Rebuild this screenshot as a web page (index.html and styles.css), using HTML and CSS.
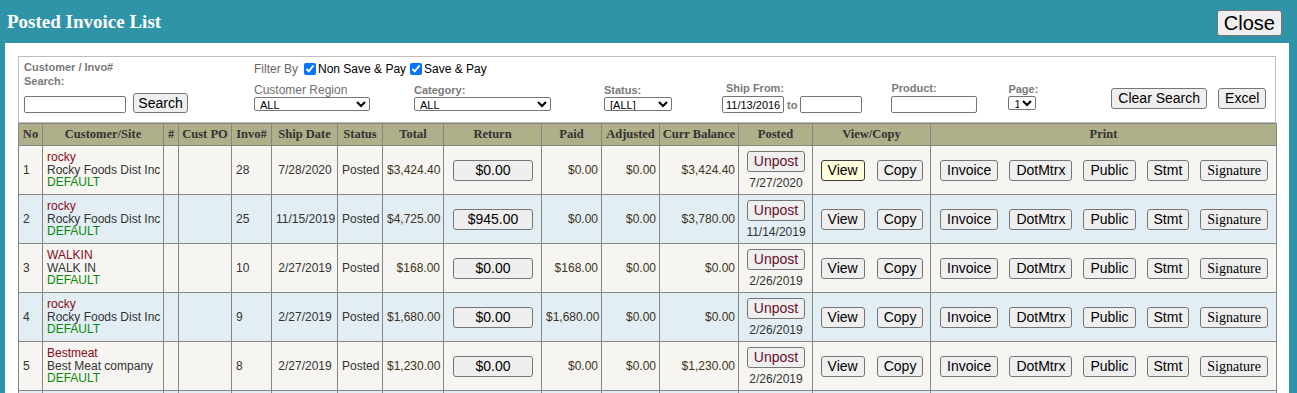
FILE: index.html
```html
<!DOCTYPE html>
<html>
<head>
<meta charset="utf-8">
<title>Posted Invoice List</title>
<link rel="stylesheet" href="styles.css">
</head>
<body>
<div class="topbar">
  <h1 class="title">Posted Invoice List</h1>
  <button class="btn close-btn">Close</button>
</div>
<div class="panel">
  <div class="filters">
    <div class="fg fg-search">
      <div class="lbl">Customer / Invo#</div>
      <div class="lbl lbl-search">Search:</div>
      <div class="inrow inrow-search">
        <input class="inp inp-search" type="text">
        <button class="btn btn-search">Search</button>
      </div>
    </div>
    <div class="fg fg-filter">
      <div class="filterby">
        <span class="fb-label">Filter By</span>
        <label class="chk"><input type="checkbox" checked>Non Save &amp; Pay</label>
        <label class="chk"><input type="checkbox" checked>Save &amp; Pay</label>
      </div>
      <div class="selrow">
        <div class="sg sg-region"><div class="lbl lbl-plain">Customer Region</div><select class="sel sel-region"><option>ALL</option></select></div>
        <div class="sg sg-cat"><div class="lbl">Category:</div><select class="sel sel-cat"><option>ALL</option></select></div>
        <div class="sg sg-status"><div class="lbl">Status:</div><select class="sel sel-status"><option>[ALL]</option></select></div>
      </div>
    </div>
    <div class="fg fg-ship">
      <div class="lbl lbl-ship">Ship From:</div>
      <div class="inrow">
        <input class="inp inp-date" type="text" value="11/13/2016">
        <span class="to">to</span>
        <input class="inp inp-date" type="text">
      </div>
    </div>
    <div class="fg fg-product">
      <div class="lbl">Product:</div>
      <input class="inp inp-product" type="text">
    </div>
    <div class="fg fg-page">
      <div class="lbl">Page:</div>
      <select class="sel sel-page"><option>1</option></select>
    </div>
    <div class="fg fg-actions">
      <button class="btn">Clear Search</button>
      <button class="btn">Excel</button>
    </div>
  </div>

  <table class="grid">
    <colgroup>
      <col class="c-no"><col class="c-cust"><col class="c-hash"><col class="c-po"><col class="c-inv">
      <col class="c-date"><col class="c-status"><col class="c-total"><col class="c-return"><col class="c-paid">
      <col class="c-adj"><col class="c-bal"><col class="c-posted"><col class="c-view"><col class="c-print">
    </colgroup>
    <thead>
      <tr>
        <th>No</th><th>Customer/Site</th><th>#</th><th>Cust PO</th><th>Invo#</th>
        <th>Ship Date</th><th>Status</th><th>Total</th><th>Return</th><th>Paid</th>
        <th>Adjusted</th><th>Curr Balance</th><th>Posted</th><th>View/Copy</th><th>Print</th>
      </tr>
    </thead>
    <tbody>
      <tr class="odd">
        <td>1</td>
        <td class="cust"><div class="code">rocky</div><div class="name">Rocky Foods Dist Inc</div><div class="site">DEFAULT</div></td>
        <td></td><td></td>
        <td>28</td>
        <td class="ctr">7/28/2020</td>
        <td>Posted</td>
        <td class="num">$3,424.40</td>
        <td class="ctr"><button class="btn btn-ret">$0.00</button></td>
        <td class="num">$0.00</td>
        <td class="num">$0.00</td>
        <td class="num">$3,424.40</td>
        <td class="ctr"><button class="btn btn-unpost">Unpost</button><div class="pdate">7/27/2020</div></td>
        <td><div class="btns btns-view"><button class="btn btn-hl">View</button><button class="btn">Copy</button></div></td>
        <td><div class="btns btns-print"><button class="btn">Invoice</button><button class="btn">DotMtrx</button><button class="btn">Public</button><button class="btn">Stmt</button><button class="btn btn-serif">Signature</button></div></td>
      </tr>
      <tr class="even">
        <td>2</td>
        <td class="cust"><div class="code">rocky</div><div class="name">Rocky Foods Dist Inc</div><div class="site">DEFAULT</div></td>
        <td></td><td></td>
        <td>25</td>
        <td class="ctr">11/15/2019</td>
        <td>Posted</td>
        <td class="num">$4,725.00</td>
        <td class="ctr"><button class="btn btn-ret">$945.00</button></td>
        <td class="num">$0.00</td>
        <td class="num">$0.00</td>
        <td class="num">$3,780.00</td>
        <td class="ctr"><button class="btn btn-unpost">Unpost</button><div class="pdate">11/14/2019</div></td>
        <td><div class="btns btns-view"><button class="btn">View</button><button class="btn">Copy</button></div></td>
        <td><div class="btns btns-print"><button class="btn">Invoice</button><button class="btn">DotMtrx</button><button class="btn">Public</button><button class="btn">Stmt</button><button class="btn btn-serif">Signature</button></div></td>
      </tr>
      <tr class="odd">
        <td>3</td>
        <td class="cust"><div class="code">WALKIN</div><div class="name">WALK IN</div><div class="site">DEFAULT</div></td>
        <td></td><td></td>
        <td>10</td>
        <td class="ctr">2/27/2019</td>
        <td>Posted</td>
        <td class="num">$168.00</td>
        <td class="ctr"><button class="btn btn-ret">$0.00</button></td>
        <td class="num">$168.00</td>
        <td class="num">$0.00</td>
        <td class="num">$0.00</td>
        <td class="ctr"><button class="btn btn-unpost">Unpost</button><div class="pdate">2/26/2019</div></td>
        <td><div class="btns btns-view"><button class="btn">View</button><button class="btn">Copy</button></div></td>
        <td><div class="btns btns-print"><button class="btn">Invoice</button><button class="btn">DotMtrx</button><button class="btn">Public</button><button class="btn">Stmt</button><button class="btn btn-serif">Signature</button></div></td>
      </tr>
      <tr class="even">
        <td>4</td>
        <td class="cust"><div class="code">rocky</div><div class="name">Rocky Foods Dist Inc</div><div class="site">DEFAULT</div></td>
        <td></td><td></td>
        <td>9</td>
        <td class="ctr">2/27/2019</td>
        <td>Posted</td>
        <td class="num">$1,680.00</td>
        <td class="ctr"><button class="btn btn-ret">$0.00</button></td>
        <td class="num">$1,680.00</td>
        <td class="num">$0.00</td>
        <td class="num">$0.00</td>
        <td class="ctr"><button class="btn btn-unpost">Unpost</button><div class="pdate">2/26/2019</div></td>
        <td><div class="btns btns-view"><button class="btn">View</button><button class="btn">Copy</button></div></td>
        <td><div class="btns btns-print"><button class="btn">Invoice</button><button class="btn">DotMtrx</button><button class="btn">Public</button><button class="btn">Stmt</button><button class="btn btn-serif">Signature</button></div></td>
      </tr>
      <tr class="odd">
        <td>5</td>
        <td class="cust"><div class="code">Bestmeat</div><div class="name">Best Meat company</div><div class="site">DEFAULT</div></td>
        <td></td><td></td>
        <td>8</td>
        <td class="ctr">2/27/2019</td>
        <td>Posted</td>
        <td class="num">$1,230.00</td>
        <td class="ctr"><button class="btn btn-ret">$0.00</button></td>
        <td class="num">$0.00</td>
        <td class="num">$0.00</td>
        <td class="num">$1,230.00</td>
        <td class="ctr"><button class="btn btn-unpost">Unpost</button><div class="pdate">2/26/2019</div></td>
        <td><div class="btns btns-view"><button class="btn">View</button><button class="btn">Copy</button></div></td>
        <td><div class="btns btns-print"><button class="btn">Invoice</button><button class="btn">DotMtrx</button><button class="btn">Public</button><button class="btn">Stmt</button><button class="btn btn-serif">Signature</button></div></td>
      </tr>
      <tr class="even">
        <td></td><td></td><td></td><td></td><td></td><td></td><td></td><td></td>
        <td></td><td></td><td></td><td></td><td></td><td></td><td></td>
      </tr>
    </tbody>
  </table>
</div>
</body>
</html>
```

FILE: styles.css
```css
* { box-sizing: border-box; }

html, body {
  margin: 0;
  padding: 0;
}

body {
  width: 1297px;
  height: 393px;
  overflow: hidden;
  background: #2f94a8;
  font-family: "Liberation Sans", Arial, sans-serif;
  font-size: 12px;
  color: #333;
}

/* ---------- top bar ---------- */
.topbar {
  display: flex;
  justify-content: space-between;
  align-items: flex-start;
  height: 43px;
  padding: 0 15px 0 7px;
}

.title {
  margin: 12px 0 0 0;
  font-family: "Liberation Serif", "Times New Roman", serif;
  font-weight: bold;
  font-size: 19px;
  line-height: 20px;
  color: #fff;
}

/* ---------- buttons ---------- */
.btn {
  font-family: "Liberation Sans", Arial, sans-serif;
  font-size: 14px;
  color: #000;
  background: #efefef;
  border: 1px solid #767676;
  border-radius: 3px;
  height: 21px;
  padding: 0 6px;
  line-height: 19px;
  margin: 0;
  white-space: nowrap;
  flex-shrink: 0;
}

.close-btn {
  margin-top: 10px;
  height: 26px;
  font-size: 20px;
  line-height: 24px;
  padding: 0 6px;
}

.btn-serif {
  font-family: "Liberation Serif", "Times New Roman", serif;
}

.btn-ret {
  width: 80px;
}

.btn-unpost {
  color: #6a0f2c;
}

.btn-hl {
  background: #ffffdc;
  border-color: #3a3a3a;
}

/* ---------- panel ---------- */
.panel {
  margin: 0 8px 0 5px;
  background: #fff;
  padding: 13px 13px 0 13px;
  height: 400px;
}

/* ---------- filters ---------- */
.filters {
  display: flex;
  align-items: flex-end;
  height: 67px;
  border: 1px solid #bdbdbd;
  padding: 0 10px 9px 5px;
}

.fg {
  display: flex;
  flex-direction: column;
  flex-shrink: 0;
}

.lbl {
  font-size: 11px;
  font-weight: bold;
  color: #7a7a7a;
  line-height: 13px;
  white-space: nowrap;
}

.lbl-plain {
  font-size: 12px;
  font-weight: normal;
  color: #6f6f6f;
}

.inrow {
  display: flex;
  align-items: center;
}

.inrow-search {
  align-items: flex-end;
}

.inp {
  height: 17px;
  border: 1px solid #767676;
  border-radius: 2px;
  padding: 0 3px;
  font-family: "Liberation Sans", Arial, sans-serif;
  font-size: 11px;
  color: #000;
}

.fg-search .lbl {
  line-height: 14px;
}

.fg-search .lbl-search {
  margin-bottom: 5px;
}

.inp-search {
  width: 102px;
}

.btn-search {
  margin-left: 7px;
  height: 20px;
  line-height: 18px;
  width: 55px;
  padding: 0;
}

.fg-filter {
  margin-left: 66px;
  margin-bottom: 2px;
}

.filterby {
  display: flex;
  align-items: center;
  height: 16px;
  margin-bottom: 7px;
  font-size: 12px;
  color: #000;
}

.fb-label {
  color: #666;
  margin-right: 2px;
}

.chk {
  display: flex;
  align-items: center;
}

.chk input {
  margin: 0 2px 0 4px;
  width: 12px;
  height: 12px;
}

.selrow {
  display: flex;
  align-items: flex-end;
}

.sg {
  display: flex;
  flex-direction: column;
}

.sg-cat { margin-left: 44px; }
.sg-status { margin-left: 53px; }

.sel {
  height: 14px;
  font-family: "Liberation Sans", Arial, sans-serif;
  font-size: 11px;
  line-height: 12px;
  color: #000;
  border: 1px solid #767676;
  border-radius: 2px;
  padding: 0 0 0 1px;
  background: #fff;
}

.sel-region { width: 116px; }
.sel-cat { width: 137px; }
.sel-status { width: 68px; }
.sel-page { width: 28px; margin-bottom: 3px; }

.fg-ship {
  margin-left: 50px;
}

.lbl-ship {
  padding-left: 4px;
  margin-bottom: 1px;
}

.inp-date {
  width: 62px;
}

.to {
  margin: 0 3px;
  color: #7a7a7a;
  font-weight: bold;
  font-size: 11px;
}

.fg-product {
  margin-left: 29px;
}

.inp-product {
  width: 86px;
  margin-top: 1px;
}

.fg-page {
  margin-left: 31px;
}

.fg-actions {
  flex-direction: row;
  margin-left: 73px;
  margin-bottom: 4px;
  gap: 11px;
}

/* ---------- table ---------- */
.grid {
  width: 1258px;
  table-layout: fixed;
  border-collapse: collapse;
  border: 1px solid #858585;
}

.c-no { width: 24px; }
.c-cust { width: 121px; }
.c-hash { width: 15px; }
.c-po { width: 53px; }
.c-inv { width: 40px; }
.c-date { width: 66px; }
.c-status { width: 45px; }
.c-total { width: 61px; }
.c-return { width: 98px; }
.c-paid { width: 60px; }
.c-adj { width: 58px; }
.c-bal { width: 79px; }
.c-posted { width: 74px; }
.c-view { width: 118px; }
.c-print { width: 346px; }

.grid th {
  height: 22px;
  background: #afaf89;
  border: 1px solid #858585;
  font-family: "Liberation Serif", "Times New Roman", serif;
  font-weight: bold;
  font-size: 12.5px;
  color: #333;
  padding: 0 2px;
  text-align: center;
  white-space: nowrap;
  overflow: hidden;
}

.grid td {
  height: 49px;
  border: 1px solid #858585;
  padding: 0 3px 0 4px;
  vertical-align: middle;
  white-space: nowrap;
  color: #333;
}

.grid tr.odd td { background: #f6f5f1; }
.grid tr.even td { background: #e2edf4; }

.grid td.num {
  text-align: right;
  color: #3d3320;
}

.grid td.ctr {
  text-align: center;
}

.cust {
  line-height: 12.5px;
}

.code { color: #8b0a1a; }
.name { color: #333; }
.site { color: #0a8a0a; }

.pdate {
  margin-top: 5px;
  color: #333;
  line-height: 12px;
}

.btns {
  display: flex;
  justify-content: center;
}

.btns-view { gap: 12px; }
.btns-print { gap: 11px; }
```
